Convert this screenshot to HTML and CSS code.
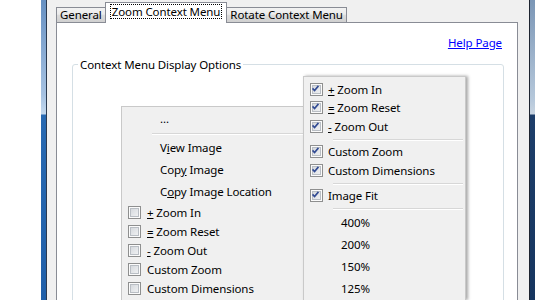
FILE: index.html
```html
<!DOCTYPE html>
<html lang="en">
<head>
    <meta charset="UTF-8">
    <meta name="viewport" content="width=device-width, initial-scale=1.0">
    <title>Zoom Context Menu Options</title>
    <link rel="stylesheet" href="styles.css">
</head>
<body>
    <div class="window">
        <div class="frame frame-left"></div>
        <div class="dialog">
            <div class="tabs">
                <div class="tab">General</div>
                <div class="tab selected"><span class="focus">Zoom Context Menu</span></div>
                <div class="tab">Rotate Context Menu</div>
            </div>
            <div class="panel">
                <div class="help-row"><a href="#" class="help">Help Page</a></div>
                <fieldset class="group">
                    <legend>Context Menu Display Options</legend>
                </fieldset>
            </div>
        </div>
        <div class="frame frame-right"></div>
    </div>

    <!-- page context menu -->
    <div class="menu menu-main">
        <div class="entry">...</div>
        <div class="sep"></div>
        <div class="entry">V<u>i</u>ew Image</div>
        <div class="entry">Cop<u>y</u> Image</div>
        <div class="entry">C<u>o</u>py Image Location</div>
        <div class="opt"><span class="box"></span><span><u>+</u> Zoom In</span></div>
        <div class="opt"><span class="box"></span><span><u>=</u> Zoom Reset</span></div>
        <div class="opt"><span class="box"></span><span><u>-</u> Zoom Out</span></div>
        <div class="opt"><span class="box"></span><span>Custom Zoom</span></div>
        <div class="opt"><span class="box"></span><span>Custom Dimensions</span></div>
    </div>

    <!-- zoom submenu -->
    <div class="menu menu-sub">
        <div class="opt"><span class="box on"><svg viewBox="0 0 13 13"><path d="M3 6.3l2.4 2.6L10 3.4"/></svg></span><span><u>+</u> Zoom In</span></div>
        <div class="opt"><span class="box on"><svg viewBox="0 0 13 13"><path d="M3 6.3l2.4 2.6L10 3.4"/></svg></span><span><u>=</u> Zoom Reset</span></div>
        <div class="opt"><span class="box on"><svg viewBox="0 0 13 13"><path d="M3 6.3l2.4 2.6L10 3.4"/></svg></span><span><u>-</u> Zoom Out</span></div>
        <div class="sep"></div>
        <div class="opt"><span class="box on"><svg viewBox="0 0 13 13"><path d="M3 6.3l2.4 2.6L10 3.4"/></svg></span><span>Custom Zoom</span></div>
        <div class="opt"><span class="box on"><svg viewBox="0 0 13 13"><path d="M3 6.3l2.4 2.6L10 3.4"/></svg></span><span>Custom Dimensions</span></div>
        <div class="sep"></div>
        <div class="opt"><span class="box on"><svg viewBox="0 0 13 13"><path d="M3 6.3l2.4 2.6L10 3.4"/></svg></span><span>Image Fit</span></div>
        <div class="sep"></div>
        <div class="entry">400%</div>
        <div class="entry">200%</div>
        <div class="entry">150%</div>
        <div class="entry">125%</div>
    </div>
</body>
</html>
```

FILE: styles.css
```css
html,
body {
    height: 300px;
    overflow: hidden;
}

body {
    margin: 0;
    background: #fff;
    font-family: "Noto Sans", "Open Sans", sans-serif;
    font-size: 11.5px;
    letter-spacing: -0.1px;
    color: #000;
}

.window {
    display: flex;
    margin-left: 41px;
    width: 494px;
    height: 300px;
}

.frame {
    width: 5px;
}

.frame-left {
    background: linear-gradient(to bottom, #6690c2 0, #a6c2e2 95px, #c4d9ee 114px, #2869b1 115px, #1f5fa9 300px);
}

.frame-right {
    background: linear-gradient(to bottom, #7b96b6 0, #b6c8db 100px, #c8d4e1 114px, #1d3e6a 115px, #16355f 300px);
}

.dialog {
    flex: 1;
    box-sizing: border-box;
    background: #f0f0f0;
    border-left: 1px solid #2b3a4f;
    border-right: 1px solid #1d2430;
    padding: 0 11px 0 9px;
}

.tabs {
    display: flex;
    align-items: flex-end;
    height: 22px;
}

.tab {
    box-sizing: border-box;
    height: 15px;
    padding: 0 3px;
    line-height: 13px;
    border: 1px solid #898c95;
    border-bottom: none;
    background: linear-gradient(#f2f2f2, #ebebeb 45%, #dcdcdc 50%, #d0d0d0);
    white-space: nowrap;
}

.tab + .tab {
    margin-left: -1px;
}

.tab.selected {
    position: relative;
    z-index: 1;
    height: 21px;
    margin-bottom: -1px;
    padding: 0 4px;
    background: #fff;
}

.focus {
    display: inline-block;
    margin-top: 1px;
    padding: 0 1px;
    line-height: 13px;
    border: 1px dotted #000;
}

.panel {
    box-sizing: border-box;
    height: 278px;
    background: #fff;
    border: 1px solid #898c95;
    border-bottom: none;
    overflow: hidden;
}

.help-row {
    padding: 12px 15px 0 0;
    line-height: 15px;
    text-align: right;
}

.help {
    color: #0000ff;
}

.group {
    height: 300px;
    margin: 7px 13px 0 15px;
    padding: 0;
    border: 1px solid #d5dfe5;
    border-radius: 3px;
}

.group legend {
    margin-left: 5px;
    padding: 0 2px;
    line-height: 15px;
}

.menu {
    position: absolute;
    box-sizing: border-box;
    padding-top: 2px;
    background: #f0f0f0;
    border: 1px solid #c9c9c9;
    border-bottom: none;
    white-space: nowrap;
    overflow: hidden;
}

.menu-main {
    left: 121px;
    top: 106px;
    width: 200px;
    height: 194px;
    padding-top: 1px;
}

.menu-sub {
    left: 303px;
    top: 76px;
    width: 163px;
    height: 224px;
    padding-top: 3px;
    box-shadow: 2px 0 3px rgba(0, 0, 0, 0.35);
}

.entry {
    height: 22px;
    line-height: 22px;
    padding-left: 38px;
}

.menu-sub .entry {
    padding-left: 37px;
}

.opt {
    display: flex;
    align-items: center;
    gap: 6px;
    height: 19px;
    padding-left: 6px;
}

.menu-sub .opt {
    gap: 5px;
    height: 18.5px;
}

.sep {
    margin: 3px 0 2px 30px;
    border-top: 1px solid #d7d7d7;
    border-bottom: 1px solid #fff;
}

.menu-sub .sep {
    margin-left: 29px;
    margin-right: 2px;
}

.box {
    box-sizing: border-box;
    flex: none;
    width: 13px;
    height: 13px;
    border: 1px solid #8e8f8f;
    background: linear-gradient(135deg, #cfd3d8, #f6f7f8);
    box-shadow: inset 0 0 0 1px #fbfbfb, inset 0 0 0 2px #b9bec4;
}

.box svg {
    display: block;
    width: 11px;
    height: 11px;
    margin: -1px 0 0 -1px;
    overflow: visible;
}

.box path {
    fill: none;
    stroke: #324b93;
    stroke-width: 1.9;
}
```
